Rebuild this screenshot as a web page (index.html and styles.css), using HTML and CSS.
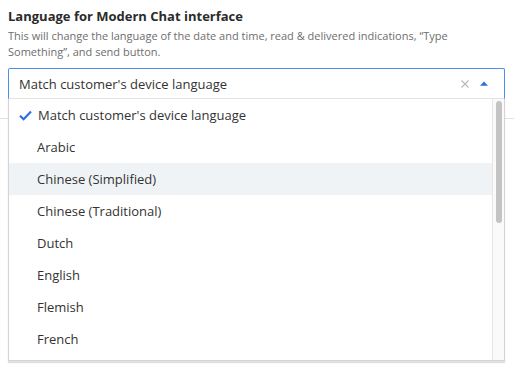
FILE: index.html
```html
<!DOCTYPE html>
<html>
<head>
<meta charset="utf-8">
<link rel="stylesheet" href="styles.css">
</head>
<body>
<div class="field">
  <div class="title">Language for Modern Chat interface</div>
  <div class="desc">This will change the language of the date and time, read &amp; delivered indications, “Type Something”, and send button.</div>
  <div class="select-wrap">
    <div class="select">
      <span class="value">Match customer's device language</span>
      <span class="clear">
        <svg width="8" height="8" viewBox="0 0 8 8"><path d="M0.5 0.5L7.5 7.5M7.5 0.5L0.5 7.5" stroke="#b8b8b8" stroke-width="1.1" fill="none"/></svg>
      </span>
      <span class="caret">
        <svg width="8" height="5" viewBox="0 0 8 5"><path d="M0 4.8L4 0.6L8 4.8Z" fill="#2d6fe0"/></svg>
      </span>
    </div>
    <div class="menu">
      <div class="list">
        <div class="option selected">
          <svg class="check" width="13" height="11" viewBox="0 0 13 11"><path d="M1 5.8L4.6 9.3L12 1.6" stroke="#2d6fe0" stroke-width="2.2" fill="none"/></svg>
          <span>Match customer's device language</span>
        </div>
        <div class="option">Arabic</div>
        <div class="option hover">Chinese (Simplified)</div>
        <div class="option">Chinese (Traditional)</div>
        <div class="option">Dutch</div>
        <div class="option">English</div>
        <div class="option">Flemish</div>
        <div class="option">French</div>
      </div>
      <div class="scrollbar"><div class="thumb"></div></div>
    </div>
  </div>
  <div class="behind"></div>
</div>
</body>
</html>
```
FILE: styles.css
```css
html, body {
  margin: 0;
  padding: 0;
  background: #fff;
}
body {
  font-family: "Open Sans", "Noto Sans", sans-serif;
  color: #333;
}
.field {
  padding: 7px 9px 0 8px;
  height: 368px;
  box-sizing: border-box;
}
.title {
  font-size: 13px;
  font-weight: 700;
  line-height: 18px;
  color: #2b2b2b;
}
.desc {
  margin-top: 3px;
  font-size: 11px;
  line-height: 16px;
  color: #6e6e6e;
  padding-right: 50px;
}
.select-wrap {
  position: relative;
  margin-top: 8px;
}
.select {
  height: 29px;
  border: 1px solid #4a8ef0;
  border-bottom-color: #e3e3e3;
  border-radius: 2px 2px 0 0;
  display: flex;
  align-items: center;
  padding: 0 0 0 10px;
  font-size: 13px;
  color: #333;
}
.value {
  flex: 1;
}
.clear {
  display: flex;
  margin-right: 11px;
}
.caret {
  display: flex;
  margin-right: 16px;
  margin-top: -1px;
}
.menu {
  position: absolute;
  left: 0;
  right: 0;
  top: 31px;
  height: 261px;
  border: 1px solid #d4d4d4;
  border-top: none;
  box-shadow: 0 2px 1px rgba(0, 0, 0, 0.12);
  background: #fff;
  display: flex;
  z-index: 2;
}
.list {
  flex: 1;
  overflow: hidden;
}
.scrollbar {
  width: 12px;
  background: #fafafa;
  border-left: 1px solid #e6e6e6;
  padding: 2px 2px 0 3px;
  box-sizing: border-box;
}
.thumb {
  height: 122px;
  background: #c4c4c4;
  border-radius: 4px;
}
.option {
  height: 32px;
  display: flex;
  align-items: center;
  padding-left: 28px;
  font-size: 13px;
  color: #333;
}
.option.selected {
  padding-left: 10px;
}
.check {
  margin-right: 6px;
}
.option.hover {
  background: #eff3f6;
}
.behind {
  margin-top: 19px;
  border-top: 1px solid #e2e2e2;
  margin-left: -8px;
  margin-right: -9px;
}
```
